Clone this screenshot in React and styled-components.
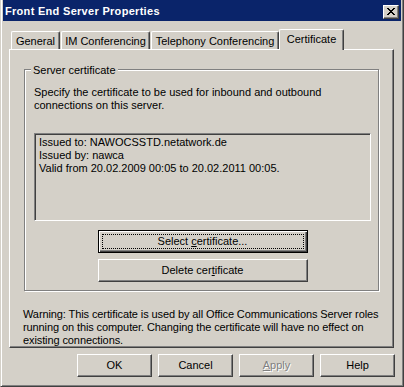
import React from 'react';
import styled, { createGlobalStyle, css } from 'styled-components';

const GlobalStyle = createGlobalStyle`
  html, body {
    margin: 0;
    padding: 0;
    background: #d4d0c8;
  }
`;

const Window = styled.div`
  box-sizing: border-box;
  width: 404px;
  height: 387px;
  padding: 0 2px 2px 2px;
  background: #d4d0c8;
  border-left: 1px solid #d4d0c8;
  border-right: 1px solid #404040;
  border-bottom: 1px solid #404040;
  box-shadow: inset 1px 0 #fff, inset -1px -1px #808080;
  display: flex;
  flex-direction: column;
  font-family: 'Liberation Sans', Arial, sans-serif;
  font-size: 11px;
  line-height: 13px;
  color: #000;
`;

const TitleBar = styled.div`
  flex: none;
  height: 21px;
  padding: 0 2px;
  background: #0a246a;
  display: flex;
  align-items: flex-start;
  justify-content: space-between;
`;

const Title = styled.div`
  padding-top: 5px;
  color: #fff;
  font-weight: bold;
  letter-spacing: 0.3px;
  white-space: nowrap;
`;

const CloseButton = styled.div`
  box-sizing: border-box;
  width: 16px;
  height: 14px;
  margin-top: 5px;
  background: #d4d0c8;
  border: 1px solid;
  border-color: #fff #404040 #404040 #fff;
  box-shadow: inset -1px -1px #808080;
  display: flex;
  align-items: center;
  justify-content: center;

  svg {
    display: block;
    margin: 0 1px 1px 0;
  }
`;

const TabStrip = styled.div`
  flex: none;
  height: 20px;
  margin: 8px 7px 0 6px;
  padding-left: 2px;
  display: flex;
  align-items: flex-end;
`;

const Tab = styled.div`
  box-sizing: border-box;
  position: relative;
  width: ${(p) => p.$width}px;
  height: 18px;
  margin-right: 1px;
  padding-top: 3px;
  text-align: center;
  white-space: nowrap;
  background: #d4d0c8;
  border-top: 1px solid #fff;
  border-left: 1px solid #fff;
  border-right: 1px solid #404040;
  border-radius: 2px 2px 0 0;
  box-shadow: inset -1px 0 #808080;

  ${(p) =>
    p.$active &&
    css`
      z-index: 2;
      height: 21px;
      margin-left: -1px;
      margin-bottom: -1px;
    `}
`;

const Panel = styled.div`
  box-sizing: border-box;
  flex: none;
  height: 299px;
  margin: 0 7px 0 6px;
  padding: 19px 14px 0;
  border-top: 1px solid #fff;
  border-left: 1px solid #fff;
  border-right: 1px solid #404040;
  border-bottom: 1px solid #404040;
  box-shadow: inset -1px -1px #808080;
  display: flex;
  flex-direction: column;
`;

const GroupBox = styled.div`
  position: relative;
  padding: 16px 7px 8px 9px;
  border: 1px solid #808080;
  box-shadow: 1px 1px 0 #fff, inset 1px 1px 0 #fff;
`;

const Legend = styled.span`
  position: absolute;
  top: -6px;
  left: 6px;
  padding: 0 2px;
  background: #d4d0c8;
  white-space: nowrap;
`;

const Lines = styled.div`
  white-space: nowrap;
`;

const InfoBox = styled.div`
  box-sizing: border-box;
  width: 337px;
  height: 88px;
  margin-top: 21px;
  padding: 2px 4px;
  border: 1px solid;
  border-color: #808080 #fff #fff #808080;
  box-shadow: inset 1px 1px #404040, inset -1px -1px #d4d0c8;
  white-space: nowrap;
`;

const ButtonStack = styled.div`
  margin-top: 9px;
  display: flex;
  flex-direction: column;
  align-items: center;
  gap: 6px;
`;

const Button = styled.button`
  box-sizing: border-box;
  width: ${(p) => p.$width}px;
  height: 23px;
  margin: 0;
  padding: 3px;
  font: inherit;
  color: #000;
  background: #d4d0c8;
  border: 1px solid;
  border-color: #fff #404040 #404040 #fff;
  border-radius: 0;
  box-shadow: inset -1px -1px #808080;
  white-space: nowrap;

  ${(p) =>
    p.$default &&
    css`
      border-color: #000;
      box-shadow: inset 1px 1px #fff, inset -1px -1px #404040, inset -2px -2px #808080;
    `}

  ${(p) =>
    p.disabled &&
    css`
      color: #808080;
      text-shadow: 1px 1px 0 #fff;
    `}
`;

const ButtonLabel = styled.span`
  box-sizing: border-box;
  height: 100%;
  display: flex;
  align-items: center;
  justify-content: center;
  border: 1px dotted ${(p) => (p.$focused ? '#000' : 'transparent')};
`;

const Warning = styled.div`
  margin: 17px 0 0 -1px;
  letter-spacing: -0.1px;
  white-space: nowrap;
`;

const DialogButtons = styled.div`
  flex: none;
  margin: 6px 6px 0 0;
  display: flex;
  justify-content: flex-end;
  gap: 6px;
`;

const CloseGlyph = () => (
  <svg width="8" height="7" viewBox="0 0 8 7" shapeRendering="crispEdges">
    <path
      fill="#000"
      d="M0 0h2v1H0zM6 0h2v1H6zM1 1h2v1H1zM5 1h2v1H5zM2 2h4v1H2zM3 3h2v1H3zM2 4h4v1H2zM1 5h2v1H1zM5 5h2v1H5zM0 6h2v1H0zM6 6h2v1H6z"
    />
  </svg>
);

const tabs = [
  { label: 'General', width: 49 },
  { label: 'IM Conferencing', width: 89 },
  { label: 'Telephony Conferencing', width: 128 },
  { label: 'Certificate', width: 65, active: true },
];

const App = () => (
  <>
    <GlobalStyle />
    <Window>
      <TitleBar>
        <Title>Front End Server Properties</Title>
        <CloseButton>
          <CloseGlyph />
        </CloseButton>
      </TitleBar>

      <TabStrip>
        {tabs.map((t) => (
          <Tab key={t.label} $width={t.width} $active={t.active}>
            {t.label}
          </Tab>
        ))}
      </TabStrip>

      <Panel>
        <GroupBox>
          <Legend>Server certificate</Legend>
          <Lines>
            Specify the certificate to be used for inbound and outbound
            <br />
            connections on this server.
          </Lines>
          <InfoBox>
            <div>Issued to: NAWOCSSTD.netatwork.de</div>
            <div>Issued by: nawca</div>
            <div>Valid from 20.02.2009 00:05 to 20.02.2011 00:05.</div>
          </InfoBox>
          <ButtonStack>
            <Button $width={210} $default>
              <ButtonLabel $focused>
                Select&nbsp;<u>c</u>ertificate...
              </ButtonLabel>
            </Button>
            <Button $width={210}>
              <ButtonLabel>
                Delete cer<u>t</u>ificate
              </ButtonLabel>
            </Button>
          </ButtonStack>
        </GroupBox>

        <Warning>
          Warning: This certificate is used by all Office Communications Server roles
          <br />
          running on this computer. Changing the certificate will have no effect on
          <br />
          existing connections.
        </Warning>
      </Panel>

      <DialogButtons>
        <Button $width={75}>
          <ButtonLabel>OK</ButtonLabel>
        </Button>
        <Button $width={75}>
          <ButtonLabel>Cancel</ButtonLabel>
        </Button>
        <Button $width={75} disabled>
          <ButtonLabel>
            <u>A</u>pply
          </ButtonLabel>
        </Button>
        <Button $width={75}>
          <ButtonLabel>Help</ButtonLabel>
        </Button>
      </DialogButtons>
    </Window>
  </>
);

export default App;
